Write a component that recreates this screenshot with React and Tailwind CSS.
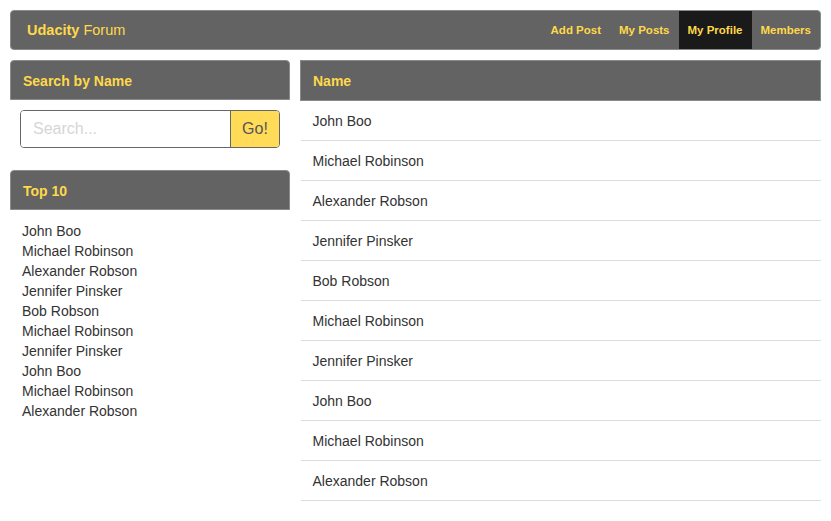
import React from "react";

const top10 = [
  "John Boo",
  "Michael Robinson",
  "Alexander Robson",
  "Jennifer Pinsker",
  "Bob Robson",
  "Michael Robinson",
  "Jennifer Pinsker",
  "John Boo",
  "Michael Robinson",
  "Alexander Robson",
];

const members = [
  "John Boo",
  "Michael Robinson",
  "Alexander Robson",
  "Jennifer Pinsker",
  "Bob Robson",
  "Michael Robinson",
  "Jennifer Pinsker",
  "John Boo",
  "Michael Robinson",
  "Alexander Robson",
];

const navLinks = ["Add Post", "My Posts", "My Profile", "Members"];

function NavBar() {
  return (
    <nav className="flex h-10 items-stretch justify-between overflow-hidden rounded-[4px] border border-[#8a8a8a] bg-[#636363]">
      <div className="flex items-center pl-4 pt-[2px] text-[14.5px] text-[#ffd94a]">
        <span className="font-bold">Udacity</span>
        <span className="ml-1">Forum</span>
      </div>
      <ul className="flex items-stretch">
        {navLinks.map((label) => (
          <li
            key={label}
            className={`flex items-center px-[9px] pt-[2px] text-[11.5px] font-bold text-[#ffd94a] ${
              label === "My Profile" ? "bg-[#1a1a1a]" : ""
            }`}
          >
            {label}
          </li>
        ))}
      </ul>
    </nav>
  );
}

function PanelHeader({ children }) {
  return (
    <div className="flex h-10 items-center rounded-t-[4px] border border-[#8a8a8a] bg-[#636363] px-3 pt-[2px] text-[14px] font-bold text-[#ffd94a]">
      {children}
    </div>
  );
}

function Sidebar() {
  return (
    <aside className="flex flex-col">
      <PanelHeader>Search by Name</PanelHeader>
      <div className="px-[10px] pt-[10px]">
        <div className="flex h-[38px] overflow-hidden rounded-[4px] border border-[#666]">
          <input
            type="text"
            placeholder="Search..."
            className="min-w-0 flex-1 bg-white px-3 text-[16px] text-[#333] outline-none placeholder:text-[#d6d6d6]"
          />
          <button className="w-[49px] border-l border-[#666] bg-[#ffdb58] text-[16px] text-[#555]">
            Go!
          </button>
        </div>
      </div>

      <div className="mt-[22px]">
        <PanelHeader>Top 10</PanelHeader>
        <ul className="px-3 pt-[11px] text-[14px] leading-5 text-[#333]">
          {top10.map((name, i) => (
            <li key={i}>{name}</li>
          ))}
        </ul>
      </div>
    </aside>
  );
}

function MembersTable() {
  return (
    <table className="w-full border-collapse text-left text-[14px]">
      <thead>
        <tr>
          <th className="h-10 border border-[#8a8a8a] bg-[#636363] px-3 pt-[2px] font-bold text-[#ffd94a]">
            Name
          </th>
        </tr>
      </thead>
      <tbody>
        {members.map((name, i) => (
          <tr key={i} className="border-b border-[#dddddd]">
            <td className="h-10 px-3 pt-[2px] text-[#333]">{name}</td>
          </tr>
        ))}
      </tbody>
    </table>
  );
}

export default function App() {
  return (
    <div className="min-h-screen bg-white p-[10px] font-['Liberation_Sans',Arial,sans-serif]">
      <NavBar />
      <div className="mt-[10px] grid grid-cols-[280px_1fr] gap-[10px]">
        <Sidebar />
        <MembersTable />
      </div>
    </div>
  );
}
